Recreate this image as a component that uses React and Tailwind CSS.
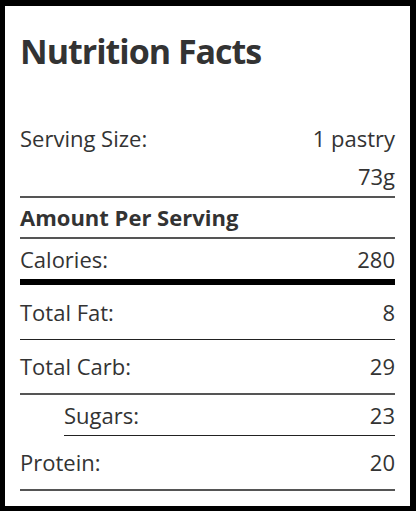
import React from 'react';

const rows = [
    { label: 'Total Fat:', value: '8', cls: 'h-[55px] border-b border-[#222]' },
    { label: 'Total Carb:', value: '29', cls: 'h-[55px] border-b-2 border-[#555]' },
    { label: 'Sugars:', value: '23', cls: 'h-[41px] border-b border-[#222] ml-[44px]' },
    { label: 'Protein:', value: '20', cls: 'h-[55px] border-b-2 border-[#555]' },
];

const App = () => {
    return (
        <div className="w-[416px] h-[511px] bg-white border-black border-t-[6px] border-l-[5px] border-r-[6px] border-b-[5px] px-[15px] text-[#333] font-['Open_Sans',sans-serif]">
            <h1 className="text-[34px] font-bold leading-[44px] pt-[23px] tracking-[-1px]">Nutrition Facts</h1>

            {/* serving size */}
            <div className="mt-[46px] flex justify-between text-[22px] leading-[38px] border-b-2 border-[#555] pb-[1px]">
                <span>Serving Size:</span>
                <span className="text-right">1 pastry<br />73g</span>
            </div>

            <div className="h-[41px] flex items-center border-b-2 border-[#555] text-[22px] font-bold">
                Amount Per Serving
            </div>

            <div className="h-[46px] flex items-center justify-between text-[22px] border-b-[6px] border-black">
                <span>Calories:</span>
                <span>280</span>
            </div>

            {rows.map((r) => (
                <div key={r.label} className={`${r.cls} flex items-center justify-between text-[22px]`}>
                    <span>{r.label}</span>
                    <span>{r.value}</span>
                </div>
            ))}
        </div>
    );
};

export default App;
